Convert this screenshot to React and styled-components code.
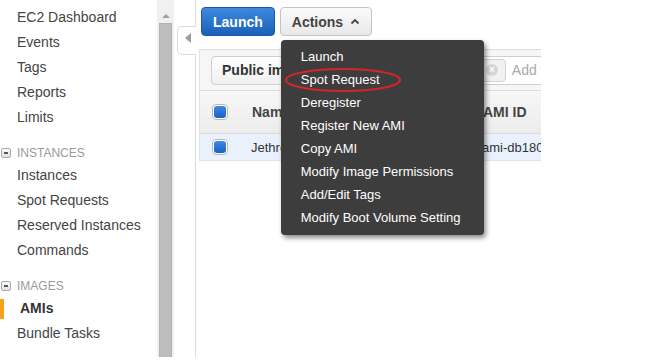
import React from 'react';
import styled, { createGlobalStyle } from 'styled-components';

const GlobalStyle = createGlobalStyle`
  html, body {
    margin: 0;
    padding: 0;
    background: #fff;
  }
  body {
    font-family: "Liberation Sans", Arial, sans-serif;
    color: #444;
  }
`;

const Page = styled.div`
  display: flex;
  height: 357px;
  overflow: hidden;
`;

const Sidebar = styled.nav`
  width: 157px;
  flex-shrink: 0;
  padding-top: 5px;
  box-sizing: border-box;
`;

const NavItem = styled.div`
  position: relative;
  height: 25px;
  line-height: 25px;
  font-size: 14px;
  color: ${(p) => (p.$active ? '#333' : '#444')};
  font-weight: ${(p) => (p.$active ? 'bold' : 'normal')};
  padding-left: ${(p) => (p.$active ? '20px' : '17px')};
  white-space: nowrap;

  &::before {
    content: '';
    display: ${(p) => (p.$active ? 'block' : 'none')};
    position: absolute;
    left: 0;
    top: 3px;
    width: 4px;
    height: 20px;
    background: #f7a21b;
  }
`;

const GroupHeader = styled.div`
  display: flex;
  align-items: center;
  gap: 6px;
  height: 20px;
  margin-top: 13px;
  padding-left: 1px;
  font-size: 12px;
  color: #9a9a9a;
  text-transform: uppercase;
`;

const Toggle = styled.span`
  width: 8px;
  height: 8px;
  border: 1px solid #aaa;
  border-radius: 2px;
  background: linear-gradient(#fafafa, #e2e2e2);
  display: flex;
  align-items: center;
  justify-content: center;

  &::after {
    content: '';
    width: 4px;
    height: 2px;
    background: #555;
  }
`;

const ScrollTrack = styled.div`
  width: 17px;
  flex-shrink: 0;
  background: #f0f0f0;
  display: flex;
  flex-direction: column;
  align-items: center;
  padding-top: 14px;
  box-sizing: border-box;
`;

const ScrollArrow = styled.div`
  width: 0;
  height: 0;
  border-left: 4px solid transparent;
  border-right: 4px solid transparent;
  border-bottom: 4px solid #a0a0a0;
`;

const ScrollThumb = styled.div`
  margin-top: 5px;
  width: 11px;
  flex: 1;
  background: #bdbdbd;
  border: 1px solid #b2b2b2;
  border-bottom: none;
`;

const Gutter = styled.div`
  width: 21px;
  flex-shrink: 0;
  display: flex;
  justify-content: flex-end;
  align-items: flex-start;
  padding-top: 26px;
  box-sizing: border-box;
`;

const CollapseTab = styled.div`
  position: relative;
  z-index: 1;
  width: 19px;
  height: 29px;
  margin-right: -1px;
  border: 1px solid #dcdcdc;
  border-right: none;
  border-radius: 5px 0 0 5px;
  background: #fff;
  display: flex;
  justify-content: center;
  padding-top: 6px;
  box-sizing: border-box;

  &::after {
    content: '';
    width: 0;
    height: 0;
    margin-left: 2px;
    border-top: 5px solid transparent;
    border-bottom: 5px solid transparent;
    border-right: 6px solid #9c9c9c;
  }
`;

const Main = styled.main`
  flex: 1;
  border-left: 1px solid #dcdcdc;
  padding: 7px 0 0 3px;
  min-width: 0;
`;

const Toolbar = styled.div`
  display: flex;
  gap: 5px;
  margin-left: 2px;
`;

const PrimaryButton = styled.button`
  height: 29px;
  padding: 0 11px;
  border: 1px solid #1b58a6;
  border-radius: 4px;
  background: linear-gradient(#3b8ade, #1c60b8);
  color: #fff;
  font-family: inherit;
  font-size: 14px;
  font-weight: bold;
`;

const ActionsWrap = styled.div`
  position: relative;
`;

const SecondaryButton = styled.button`
  height: 29px;
  padding: 0 11px;
  display: flex;
  align-items: center;
  gap: 7px;
  border: 1px solid #c4c4c4;
  border-radius: 4px;
  background: linear-gradient(#fbfbfb, #e8e8e8);
  color: #444;
  font-family: inherit;
  font-size: 14px;
  font-weight: bold;
`;

const Menu = styled.ul`
  position: absolute;
  z-index: 5;
  top: 33px;
  left: 1px;
  width: 203px;
  margin: 0;
  padding: 5px 0 6px;
  list-style: none;
  background: #3d3d3d;
  border-radius: 4px;
  box-shadow: 2px 3px 5px rgba(0, 0, 0, 0.45);
  box-sizing: border-box;
`;

const MenuItem = styled.li`
  height: 23px;
  line-height: 23px;
  padding-left: 20px;
  font-size: 13px;
  color: #fff;
  white-space: nowrap;
`;

const Highlight = styled.svg`
  position: absolute;
  left: 3px;
  top: 27px;
  pointer-events: none;
`;

const Panel = styled.section`
  width: 341px;
  margin-top: 13px;
  border-left: 1px solid #e2e2e2;
  border-top: 1px solid #dcdcdc;
  overflow: hidden;
`;

const FilterBar = styled.div`
  display: flex;
  align-items: center;
  gap: 10px;
  height: 40px;
  padding: 0 0 0 11px;
  background: #f6f6f6;
  border-bottom: 1px solid #dcdcdc;
`;

const FilterSelect = styled.div`
  height: 27px;
  flex-shrink: 0;
  padding: 0 10px;
  display: flex;
  align-items: center;
  border: 1px solid #cfcfcf;
  border-radius: 4px;
  background: linear-gradient(#fff, #f0f0f0);
  font-size: 14px;
  font-weight: bold;
  color: #333;
`;

const SearchBox = styled.div`
  flex: 1;
  height: 27px;
  display: flex;
  align-items: center;
  gap: 6px;
  padding-left: 4px;
  border: 1px solid #cfcfcf;
  border-right: none;
  background: #fff;
  white-space: nowrap;
  overflow: hidden;
`;

const Token = styled.span`
  height: 21px;
  flex-shrink: 0;
  display: flex;
  align-items: center;
  gap: 6px;
  padding: 0 7px 0 8px;
  border: 1px solid #d2d2d2;
  border-radius: 4px;
  background: #f1f1f1;
  font-size: 13px;
  color: #444;
`;

const TokenClear = styled.span`
  width: 12px;
  height: 12px;
  border-radius: 50%;
  background: #d6d6d6;
  color: #fff;
  font-size: 10px;
  line-height: 12px;
  text-align: center;
  font-weight: bold;
`;

const Placeholder = styled.span`
  font-size: 14px;
  color: #aaa;
`;

const TableGrid = styled.div`
  display: grid;
  grid-template-columns: 41px 110px 121px 1fr;
`;

const HeadCell = styled.div`
  height: 43px;
  display: flex;
  align-items: center;
  padding-left: ${(p) => (p.$check ? '12px' : '11px')};
  background: linear-gradient(#f7f7f7, #ececec);
  border-bottom: 1px solid #dcdcdc;
  font-size: 14px;
  font-weight: bold;
  color: #444;
  white-space: nowrap;
  box-sizing: border-box;
  position: relative;

  & + &::before {
    content: '';
    position: absolute;
    left: 0;
    top: 10px;
    bottom: 10px;
    border-left: 1px solid #d4d4d4;
  }
`;

const Cell = styled.div`
  height: 27px;
  display: flex;
  align-items: center;
  padding-left: ${(p) => (p.$check ? '12px' : '10px')};
  background: #e9f2fc;
  border-bottom: 1px solid #dde4ec;
  font-size: 13px;
  color: #333;
  white-space: nowrap;
  overflow: hidden;
  box-sizing: border-box;
`;

const Check = styled.span`
  width: 16px;
  height: 16px;
  box-sizing: border-box;
  border: 1px solid #b9b9b9;
  border-radius: 4px;
  background: #fff;
  padding: 1px;
  display: flex;

  &::after {
    content: '';
    flex: 1;
    border-radius: 3px;
    background: linear-gradient(#3c8ae4, #1763c4);
  }
`;

const navTop = ['EC2 Dashboard', 'Events', 'Tags', 'Reports', 'Limits'];
const navInstances = ['Instances', 'Spot Requests', 'Reserved Instances', 'Commands'];

const actions = [
  'Launch',
  'Spot Request',
  'Deregister',
  'Register New AMI',
  'Copy AMI',
  'Modify Image Permissions',
  'Add/Edit Tags',
  'Modify Boot Volume Setting',
];

function Caret() {
  return (
    <svg width="10" height="7" viewBox="0 0 10 7">
      <polyline points="1.5,5.5 5,2 8.5,5.5" fill="none" stroke="#444" strokeWidth="1.8" />
    </svg>
  );
}

export default function App() {
  return (
    <>
      <GlobalStyle />
      <Page>
        <Sidebar>
          {navTop.map((n) => (
            <NavItem key={n}>{n}</NavItem>
          ))}
          <GroupHeader>
            <Toggle />
            Instances
          </GroupHeader>
          {navInstances.map((n) => (
            <NavItem key={n}>{n}</NavItem>
          ))}
          <GroupHeader>
            <Toggle />
            Images
          </GroupHeader>
          <NavItem $active>AMIs</NavItem>
          <NavItem>Bundle Tasks</NavItem>
        </Sidebar>

        <ScrollTrack>
          <ScrollArrow />
          <ScrollThumb />
        </ScrollTrack>

        <Gutter>
          <CollapseTab />
        </Gutter>

        <Main>
          <Toolbar>
            <PrimaryButton>Launch</PrimaryButton>
            <ActionsWrap>
              <SecondaryButton>
                Actions <Caret />
              </SecondaryButton>
              <Menu>
                {actions.map((a) => (
                  <MenuItem key={a}>{a}</MenuItem>
                ))}
                <Highlight width="118" height="26" viewBox="0 0 118 26">
                  <ellipse cx="59" cy="13" rx="57" ry="11" fill="none" stroke="#d3262a" strokeWidth="2.2" />
                </Highlight>
              </Menu>
            </ActionsWrap>
          </Toolbar>

          <Panel>
            <FilterBar>
              <FilterSelect>Public images</FilterSelect>
              <SearchBox>
                <Token>
                  Owner : 12345678901
                  <TokenClear>×</TokenClear>
                </Token>
                <Placeholder>Add filter</Placeholder>
              </SearchBox>
            </FilterBar>
            <TableGrid>
              <HeadCell $check>
                <Check />
              </HeadCell>
              <HeadCell>Name</HeadCell>
              <HeadCell>Source</HeadCell>
              <HeadCell>AMI ID</HeadCell>
              <Cell $check>
                <Check />
              </Cell>
              <Cell>Jethro</Cell>
              <Cell>jethro-base</Cell>
              <Cell>ami-db180db2</Cell>
            </TableGrid>
          </Panel>
        </Main>
      </Page>
    </>
  );
}
